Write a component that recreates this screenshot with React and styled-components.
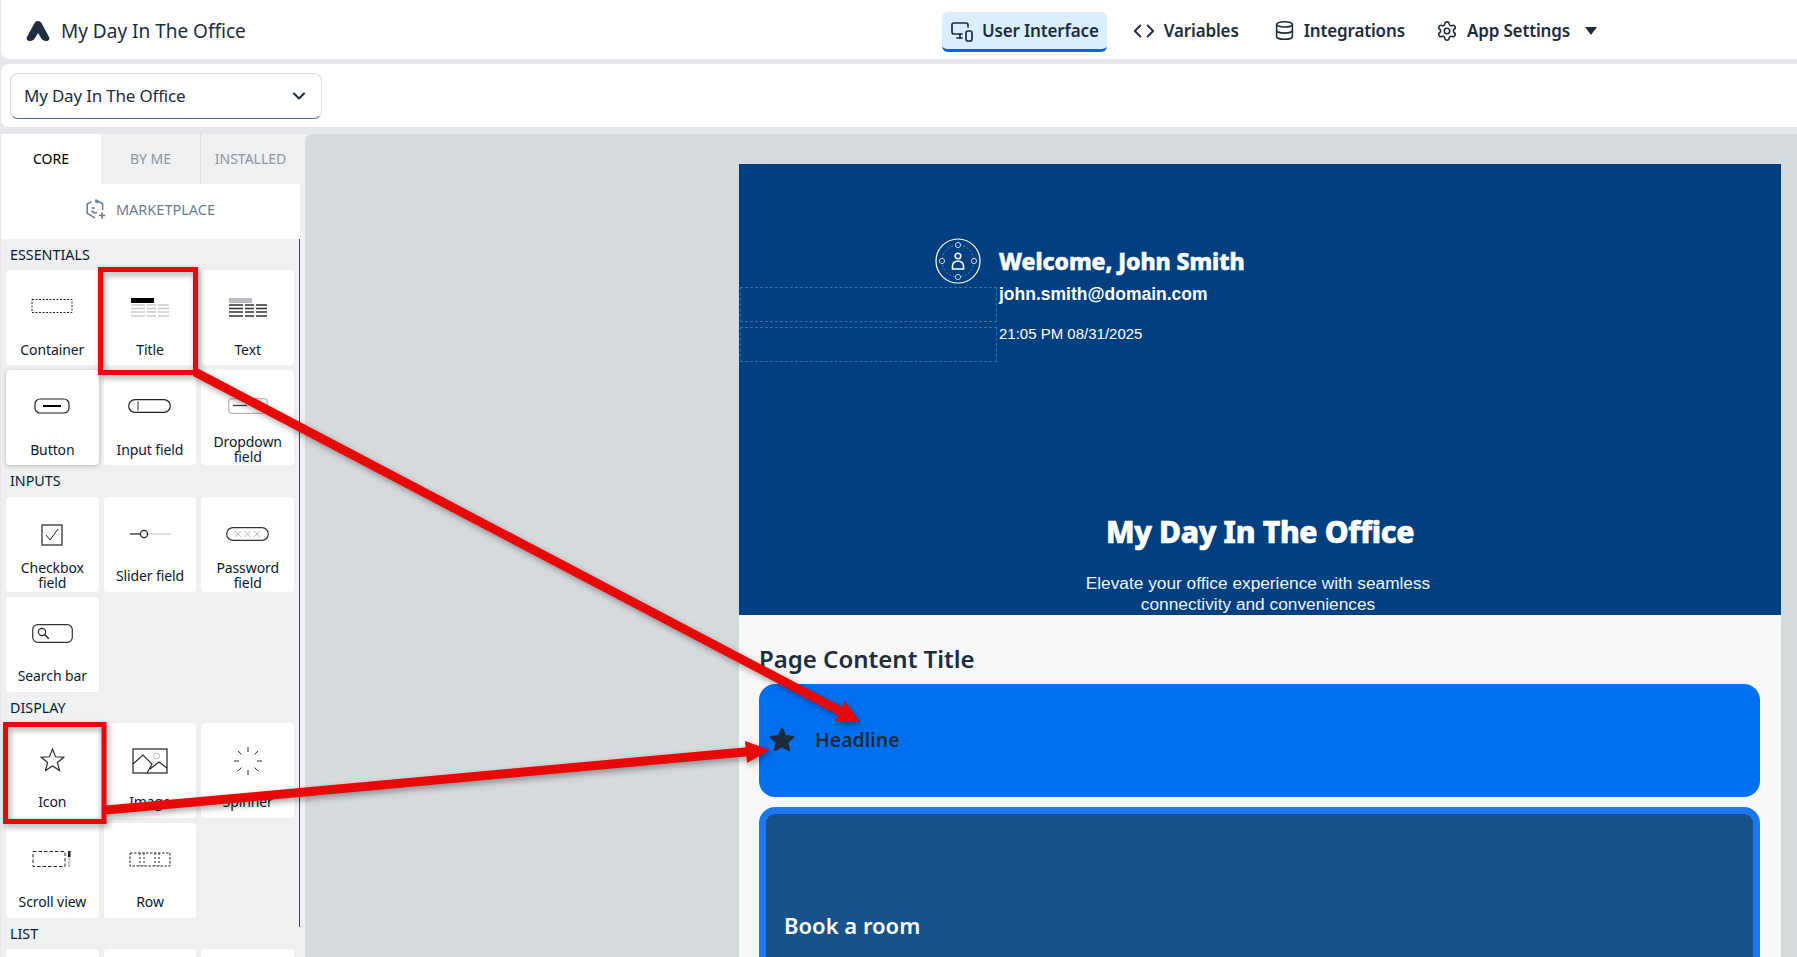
import React from "react";
import styled, { createGlobalStyle } from "styled-components";
import { ChevronDown, Code, Database, MonitorSmartphone, Settings } from "lucide-react";

const Global = createGlobalStyle`
  html, body { margin: 0; padding: 0; background: #e5e7ea; }
  body { font-family: "Noto Sans", "Liberation Sans", sans-serif; color: #1d2d3e; }
  * { box-sizing: border-box; }
`;

const Page = styled.div`
  position: relative;
  width: 1797px;
  height: 957px;
  overflow: hidden;
  padding-left: 1px;
  display: flex;
  flex-direction: column;
  background: #e5e7ea;
`;

const Header = styled.header`
  height: 59px;
  flex: none;
  display: flex;
  align-items: center;
  background: #fff;
  border-bottom-left-radius: 8px;
  padding: 5px 191px 0 24px;
`;
const Brand = styled.div`
  display: flex;
  align-items: center;
  gap: 10px;
  font-size: 19px;
  margin-right: auto;
  padding-bottom: 2px;
`;
const Nav = styled.nav`
  display: flex;
  align-items: center;
`;
const NavItem = styled.div`
  height: 40px;
  display: flex;
  align-items: center;
  gap: ${(p) => p.$gap || 9}px;
  padding: 0 ${(p) => (p.$active ? 8 : 9)}px;
  margin-left: ${(p) => p.$ml || 0}px;
  font-size: 17px;
  font-weight: 600;
  letter-spacing: -0.15px;
  border-radius: 6px;
  background: ${(p) => (p.$active ? "#dbeeff" : "transparent")};
  border-bottom: 3px solid ${(p) => (p.$active ? "#0064d9" : "transparent")};
`;

const Toolbar = styled.div`
  height: 63px;
  flex: none;
  margin-top: 5px;
  display: flex;
  align-items: center;
  padding-left: 9px;
  background: #fff;
  border-radius: 8px 0 0 8px;
`;
const Select = styled.div`
  width: 312px;
  height: 46px;
  display: flex;
  align-items: center;
  justify-content: space-between;
  padding: 0 12px 0 13px;
  font-size: 17px;
  letter-spacing: -0.2px;
  border: 1px solid #d9dde1;
  border-bottom: 1px solid #556b82;
  border-radius: 8px;
  background: #fff;
`;

const Workspace = styled.div`
  flex: 1;
  min-height: 0;
  margin-top: 7px;
  display: flex;
  background: #eef0f2;
`;

const Sidebar = styled.aside`
  width: 299px;
  flex: none;
  display: flex;
  flex-direction: column;
  background: #fff;
`;
const Tabs = styled.div`
  height: 50px;
  flex: none;
  display: grid;
  grid-template-columns: 100px 99px 100px;
`;
const Tab = styled.div`
  display: flex;
  align-items: center;
  justify-content: center;
  padding-bottom: 2px;
  font-size: 14px;
  background: ${(p) => (p.$active ? "#fff" : "#eef0f2")};
  color: ${(p) => (p.$active ? "#000" : "#8b95a1")};
  border-left: ${(p) => (p.$divider ? "1px solid #d9dce0" : "none")};
`;
const Market = styled.div`
  height: 55px;
  flex: none;
  display: flex;
  align-items: center;
  justify-content: center;
  gap: 9px;
  padding: 0 1px 5px 0;
  font-size: 14.5px;
  color: #6a7d90;
`;
const List = styled.div`
  position: relative;
  flex: 1;
  min-height: 0;
  overflow: hidden;
  padding: 0 6px 0 5px;
  background: #eef0f2;
  &::after {
    content: "";
    position: absolute;
    top: 0;
    right: -1px;
    width: 2px;
    height: 688px;
    background: #37455a;
  }
`;
const SectionLabel = styled.div`
  height: ${(p) => p.$h}px;
  display: flex;
  align-items: center;
  padding: 0 0 ${(p) => p.$lift}px 4px;
  font-size: 14.3px;
  color: #0b1b2b;
`;
const Grid = styled.div`
  display: grid;
  grid-template-columns: repeat(3, 1fr);
  grid-auto-rows: 95px;
  gap: 5px;
`;
const Card = styled.div`
  display: flex;
  flex-direction: column;
  align-items: center;
  background: #fff;
  border-radius: 4px;
  box-shadow: ${(p) => (p.$raised ? "0 1px 4px rgba(0,0,0,.25)" : "none")};
`;
const CardIcon = styled.div`
  height: 63px;
  flex: none;
  padding-top: ${(p) => p.$pad}px;
  display: flex;
  align-items: center;
  justify-content: center;
`;
const CardLabel = styled.div`
  height: 32px;
  display: flex;
  align-items: center;
  padding-bottom: ${(p) => p.$lift}px;
  text-align: center;
  font-size: 14px;
  line-height: 15px;
  color: #0b1b2b;
  letter-spacing: -0.1px;
`;

const Canvas = styled.main`
  flex: 1;
  margin-left: 5px;
  padding: 30px 16px 0 434px;
  background: #d5dadd;
  border-top-left-radius: 8px;
  overflow: hidden;
`;
const Preview = styled.div`
  height: 800px;
  background: #f8f8f8;
`;
const Hero = styled.section`
  height: 451px;
  background: #004081;
  color: #fff;
  display: flex;
  flex-direction: column;
  position: relative;
`;
const Profile = styled.div`
  display: flex;
  padding: 74px 0 0 196px;
  height: 329px;
  gap: 18px;
`;
const ProfileText = styled.div`
  display: flex;
  flex-direction: column;
`;
const Welcome = styled.div`
  font-size: 23px;
  font-weight: 800;
  line-height: 46px;
  letter-spacing: -0.05px;
  -webkit-text-stroke: 0.6px #fff;
`;
const Email = styled.div`
  font-family: "Liberation Sans", sans-serif;
  font-size: 17.5px;
  font-weight: 700;
  line-height: 20px;
`;
const DateLine = styled.div`
  font-family: "Liberation Sans", sans-serif;
  font-size: 15px;
  line-height: 20px;
  margin-top: 20px;
`;
const Ghost = styled.div`
  position: absolute;
  left: 1px;
  top: ${(p) => p.$top}px;
  width: 257px;
  height: 35px;
  border: 1px dashed rgba(150, 180, 210, 0.4);
`;
const HeroTitle = styled.h1`
  margin: 19px 0 0;
  text-align: center;
  font-size: 30px;
  font-weight: 800;
  line-height: 40px;
  letter-spacing: -0.3px;
  -webkit-text-stroke: 0.7px #fff;
`;
const HeroSub = styled.p`
  margin: 21px 4px 0 0;
  text-align: center;
  font-family: "Liberation Sans", sans-serif;
  font-size: 17.3px;
  line-height: 21px;
  color: #eef4fa;
`;
const Content = styled.section`
  padding: 26px 21px 0 20px;
  display: flex;
  flex-direction: column;
`;
const ContentTitle = styled.h2`
  margin: 0;
  height: 43px;
  font-size: 24px;
  font-weight: 600;
  line-height: 36px;
  color: #1d2d3e;
`;
const HeadlineCard = styled.div`
  height: 113px;
  display: flex;
  align-items: center;
  gap: 18px;
  padding: 0 0 2px 8px;
  background: #0070f2;
  border-radius: 16px;
  font-size: 19.5px;
  font-weight: 600;
  color: #1d2d3e;
`;
const BookCard = styled.div`
  height: 200px;
  margin-top: 10px;
  padding: 91px 0 0 18px;
  background: #17538a;
  border: 7px solid #1c78ee;
  border-bottom: none;
  border-radius: 16px 16px 0 0;
  font-size: 22px;
  font-weight: 600;
  line-height: 40px;
  color: #fff;
`;

const Notes = styled.svg`
  position: absolute;
  left: 0;
  top: 0;
  pointer-events: none;
  filter: drop-shadow(2px 3px 3px rgba(0, 0, 0, 0.35));
`;

const Logo = () => (
  <svg width="26" height="24" viewBox="0 0 26 24">
    <path d="M13 2c2 0 3 1 4 3l7 13c1 2 0 4-3 4-2 0-4-1-5-3l-3-5-3 5c-1 2-3 3-5 3-3 0-4-2-3-4L9 5c1-2 2-3 4-3z" fill="#1d2d3e" />
  </svg>
);

const D = "#222";
const icons = {
  container: (
    <svg width="42" height="16" viewBox="0 0 42 16"><rect x="1" y="1.5" width="40" height="13" fill="none" stroke={D} strokeWidth="1" strokeDasharray="2 1.5" /></svg>
  ),
  title: (
    <svg width="40" height="20" viewBox="0 0 40 20">
      <rect x="1" y="0" width="23" height="5" fill="#000" />
      <path d="M1 7h38M1 10.5h38M1 14h38M1 18h38" stroke="#c9cbce" strokeWidth="1.4" strokeDasharray="14 2 9 2" />
    </svg>
  ),
  text: (
    <svg width="40" height="20" viewBox="0 0 40 20">
      <rect x="1" y="0" width="23" height="5" fill="#b9bcc2" />
      <path d="M1 7h38M1 10.5h38M1 14h38M1 18h38" stroke="#333" strokeWidth="1.4" strokeDasharray="14 2 9 2" />
    </svg>
  ),
  button: (
    <svg width="36" height="16" viewBox="0 0 36 16"><rect x="1" y="1" width="34" height="14" rx="5" fill="none" stroke={D} strokeWidth="1.2" /><path d="M9 8h18" stroke="#000" strokeWidth="2" /></svg>
  ),
  input: (
    <svg width="43" height="14" viewBox="0 0 43 14"><rect x=".7" y=".7" width="41.6" height="12.6" rx="6.3" fill="none" stroke={D} strokeWidth="1.2" /><path d="M10 2.5v9" stroke={D} strokeWidth="1" /></svg>
  ),
  dropdown: (
    <svg width="40" height="16" viewBox="0 0 40 16"><rect x=".7" y=".7" width="38.6" height="14.6" rx="3" fill="none" stroke="#b7babf" strokeWidth="1.2" /><path d="M5 7.5h14" stroke="#333" strokeWidth="1.2" /></svg>
  ),
  checkbox: (
    <svg width="22" height="22" viewBox="0 0 22 22"><rect x="1" y="1" width="20" height="20" fill="none" stroke="#444" strokeWidth="1.4" /><path d="M5 11l4 5 8-11" fill="none" stroke="#222" strokeWidth="1" /></svg>
  ),
  slider: (
    <svg width="42" height="12" viewBox="0 0 42 12"><path d="M1 6h10" stroke="#222" strokeWidth="1.2" /><path d="M18 6h24" stroke="#c9cbce" strokeWidth="1.2" /><circle cx="15" cy="6" r="3.6" fill="#fff" stroke="#222" strokeWidth="1.2" /></svg>
  ),
  password: (
    <svg width="43" height="14" viewBox="0 0 43 14">
      <rect x=".7" y=".7" width="41.6" height="12.6" rx="6.3" fill="none" stroke="#333" strokeWidth="1.2" />
      <path d="M9 4l6 6M15 4l-6 6M18.500 4l6 6M24.500 4l-6 6M28 4l6 6M34 4l-6 6" stroke="#b9bcc2" strokeWidth="1" />
    </svg>
  ),
  search: (
    <svg width="41" height="19" viewBox="0 0 41 19">
      <rect x=".7" y=".7" width="39.6" height="17.6" rx="5" fill="none" stroke="#333" strokeWidth="1.2" />
      <circle cx="10" cy="8" r="3.6" fill="none" stroke="#222" strokeWidth="1.2" />
      <path d="M12.800 10.800l4 4" stroke="#222" strokeWidth="1.4" />
    </svg>
  ),
  star: (
    <svg width="25" height="25" viewBox="0 0 25 25"><path d="M12.500 2l3 7.700 8.300.5-6.400 5.300 2.100 8-7-4.500-7 4.500 2.100-8-6.400-5.300 8.300-.5z" fill="none" stroke="#222" strokeWidth="1.1" /></svg>
  ),
  image: (
    <svg width="36" height="26" viewBox="0 0 36 26">
      <rect x="1" y="1" width="34" height="24" fill="none" stroke="#222" strokeWidth="1.2" />
      <path d="M1 16l10-9 9 9-5 9M18 21l9-7 8 6" fill="none" stroke="#222" strokeWidth="1.1" />
      <circle cx="24.500" cy="8" r="3" fill="none" stroke="#b9bcc2" strokeWidth="1" />
    </svg>
  ),
  spinner: (
    <svg width="30" height="30" viewBox="0 0 30 30"><path d="M15 1v5M15 24v5M1 15h5M24 15h5M5 5l3.500 3.500M25 5l-3.500 3.500M5 25l3.500-3.500M25 25l-3.500-3.500" stroke="#333" strokeWidth="1" /></svg>
  ),
  scroll: (
    <svg width="40" height="18" viewBox="0 0 40 18"><rect x="1" y="1.500" width="32" height="15" fill="none" stroke={D} strokeWidth="1" strokeDasharray="3.500 2" /><rect x="36" y="1" width="2.500" height="6" fill="#222" /><rect x="36" y="7" width="2.500" height="10" fill="#c9cbce" /></svg>
  ),
  row: (
    <svg width="42" height="15" viewBox="0 0 42 15"><rect x="1" y="1" width="40" height="13" fill="none" stroke={D} strokeWidth="1" strokeDasharray="2.500 1.500" /><path d="M11 1v13M15 1v13M26 1v13M30 1v13" stroke={D} strokeWidth="1" strokeDasharray="2 2" /></svg>
  ),
};
const iconPad = { title: 13, text: 13, checkbox: 13, slider: 11, password: 11, search: 10, image: 12, spinner: 13 };

const sections = [
  { label: "ESSENTIALS", h: 31, lift: 0, items: [["container", "Container"], ["title", "Title"], ["text", "Text"], ["button", "Button", true], ["input", "Input field"], ["dropdown", "Dropdown field"]] },
  { label: "INPUTS", h: 32, lift: 2, items: [["checkbox", "Checkbox field"], ["slider", "Slider field"], ["password", "Password field"], ["search", "Search bar"]] },
  { label: "DISPLAY", h: 31, lift: 0, items: [["star", "Icon"], ["image", "Image"], ["spinner", "Spinner"], ["scroll", "Scroll view"], ["row", "Row"]] },
  { label: "LIST", h: 31, lift: 0, items: [[null, ""], [null, ""], [null, ""]] },
];

export default function App() {
  return (
    <Page>
      <Global />
      <Header>
        <Brand><Logo />My Day In The Office</Brand>
        <Nav>
          <NavItem $active $gap={8}><MonitorSmartphone size={24} strokeWidth={1.7} />User Interface</NavItem>
          <NavItem $ml={17}><Code size={22} strokeWidth={2} />Variables</NavItem>
          <NavItem $ml={17}><Database size={21} strokeWidth={1.8} />Integrations</NavItem>
          <NavItem $ml={13}><Settings size={22} strokeWidth={1.7} />App Settings
            <svg width="12" height="8" viewBox="0 0 12 8" style={{ marginLeft: 6 }}><path d="M0 0h12L6 8z" fill="#1d2d3e" /></svg>
          </NavItem>
        </Nav>
      </Header>
      <Toolbar>
        <Select>My Day In The Office<ChevronDown size={20} strokeWidth={2.5} /></Select>
      </Toolbar>
      <Workspace>
        <Sidebar>
          <Tabs>
            <Tab $active>CORE</Tab>
            <Tab>BY ME</Tab>
            <Tab $divider>INSTALLED</Tab>
          </Tabs>
          <Market>
            <svg width="22" height="22" viewBox="0 0 20 20" fill="none" stroke="#6a7d90" strokeWidth="1.4">
              <path d="M9.500 1.500l6.500 3.700v6M9 18l-7-4V5.500l4-2.200M12 4.500L9 2.800" />
              <path d="M6 9h3M6 11.500l2 2h3" />
              <path d="M15.500 13v6M12.500 16h6" />
            </svg>
            MARKETPLACE
          </Market>
          <List>
            {sections.map((s) => (
              <React.Fragment key={s.label}>
                <SectionLabel $h={s.h} $lift={s.lift}>{s.label}</SectionLabel>
                <Grid>
                  {s.items.map(([icon, label, raised], i) => (
                    <Card key={i} $raised={raised}>
                      <CardIcon $pad={iconPad[icon] || 9}>{icons[icon]}</CardIcon>
                      <CardLabel $lift={s.label === "ESSENTIALS" ? 0 : 2}>{label}</CardLabel>
                    </Card>
                  ))}
                </Grid>
              </React.Fragment>
            ))}
          </List>
        </Sidebar>
        <Canvas>
          <Preview>
            <Hero>
              <Ghost $top={123} />
              <Ghost $top={163} />
              <Profile>
                <svg width="46" height="46" viewBox="0 0 46 46" fill="none" stroke="#fff">
                  <circle cx="23" cy="23" r="22" strokeWidth="1.2" />
                  <circle cx="23" cy="23" r="16" strokeWidth=".6" strokeDasharray="2 2" opacity=".6" />
                  <g strokeWidth=".9" fill="#004081" opacity=".85">
                    <circle cx="23" cy="7" r="2.600" /><circle cx="23" cy="39" r="2.600" /><circle cx="7" cy="23" r="2.600" /><circle cx="39" cy="23" r="2.600" />
                  </g>
                  <circle cx="23" cy="18" r="2.800" strokeWidth="1.6" />
                  <path d="M17.500 31v-3a5.500 5 0 0 1 11 0v3z" strokeWidth="1.6" />
                </svg>
                <ProfileText>
                  <Welcome>Welcome, John Smith</Welcome>
                  <Email>john.smith@domain.com</Email>
                  <DateLine>21:05 PM 08/31/2025</DateLine>
                </ProfileText>
              </Profile>
              <HeroTitle>My Day In The Office</HeroTitle>
              <HeroSub>Elevate your office experience with seamless<br />connectivity and conveniences</HeroSub>
            </Hero>
            <Content>
              <ContentTitle>Page Content Title</ContentTitle>
              <HeadlineCard>
                <svg width="30" height="30" viewBox="0 0 30 30"><path d="M15 3.500l3.400 7.600 8.100.8-6.100 5.400 1.800 8-7.200-4.200-7.200 4.200 1.800-8-6.100-5.400 8.100-.8z" fill="#1d2d3e" stroke="#1d2d3e" strokeWidth="2" strokeLinejoin="round" /></svg>
                Headline
              </HeadlineCard>
              <BookCard>Book a room</BookCard>
            </Content>
          </Preview>
        </Canvas>
      </Workspace>
      <Notes width="1797" height="957" viewBox="0 0 1797 957">
        <g fill="none" stroke="#e80808" strokeWidth="5">
          <rect x="100.500" y="269.500" width="95" height="103" />
          <rect x="5.500" y="724.500" width="98.500" height="97" />
        </g>
        <path d="M195 372L842 712" stroke="#e80808" strokeWidth="9" />
        <path d="M845 701L835 722L860 722z" fill="#e80808" />
        <path d="M106 810L750 751.500" stroke="#e80808" strokeWidth="9" />
        <path d="M745 741L747 763L770 750z" fill="#e80808" />
      </Notes>
    </Page>
  );
}
